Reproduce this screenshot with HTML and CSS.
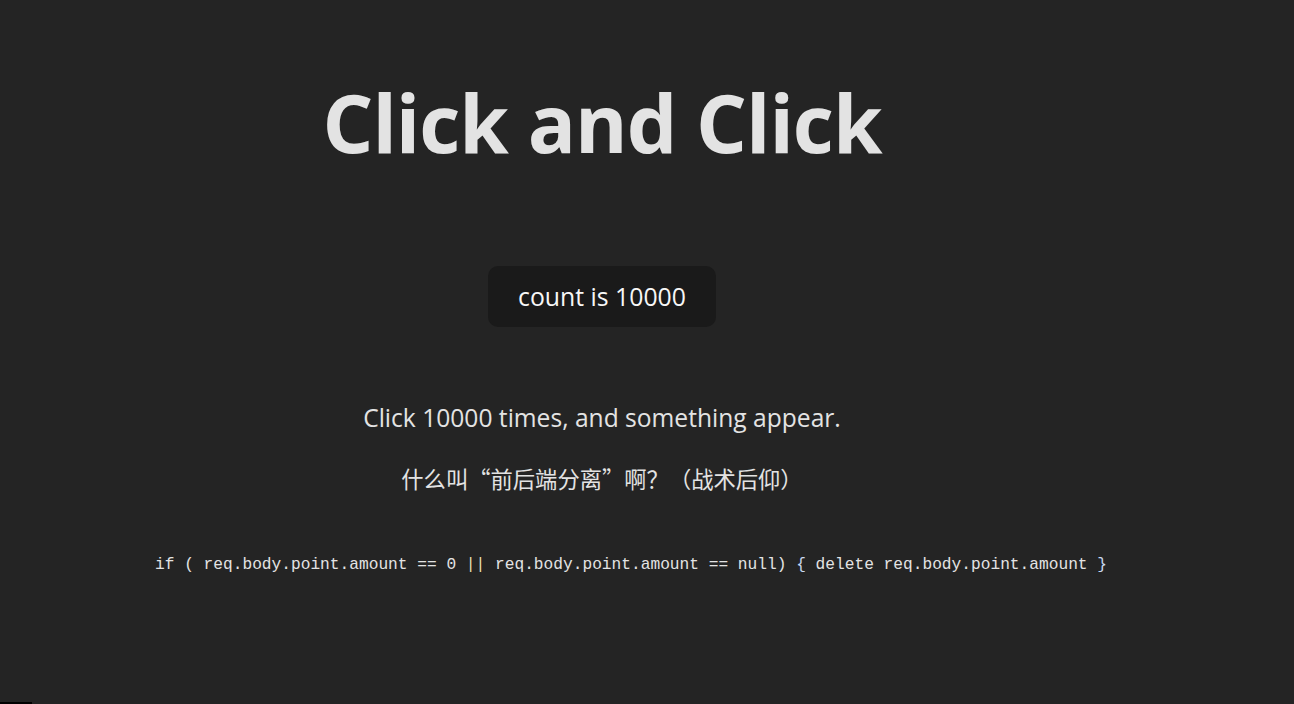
FILE: index.html
```html
<!DOCTYPE html>
<html lang="zh-CN">
<head>
<meta charset="utf-8">
<title>Click and Click</title>
<link rel="stylesheet" href="styles.css">
</head>
<body>
<main class="app">
  <h1 class="title">Click and Click</h1>
  <div class="card">
    <button class="counter" type="button">count is 10000</button>
  </div>
  <p class="hint">Click 10000 times, and something appear.</p>
  <p class="joke">什么叫“前后端分离”啊？（战术后仰）</p>
  <p class="code">if ( req.body.point.amount == 0 <span class="op">||</span> req.body.point.amount == null) <span class="brace">{</span> delete req.body.point.amount <span class="brace">}</span></p>
</main>
<div class="corner"></div>
</body>
</html>
```

FILE: styles.css
```css
html, body {
  margin: 0;
  padding: 0;
}

body {
  background: #242424;
  color: rgba(255, 255, 255, 0.87);
  font-family: "Open Sans", "Noto Sans CJK SC", sans-serif;
  min-height: 704px;
  overflow: hidden;
}

.app {
  width: 1204px;
  display: flex;
  flex-direction: column;
  align-items: center;
  text-align: center;
}

.title {
  margin: 78px 0 0;
  font-size: 80px;
  line-height: 88px;
  font-weight: 700;
  letter-spacing: -1px;
  color: #e3e3e3;
}

.card {
  margin-top: 100px;
}

.counter {
  font-family: inherit;
  font-size: 24.8px;
  line-height: 32px;
  padding: 14px 30px 15px;
  border: 0;
  border-radius: 10px;
  background: #1a1a1a;
  color: #f7f7f7;
  cursor: pointer;
}

.hint {
  margin: 75px 0 0;
  font-size: 24.6px;
  line-height: 32px;
  color: #e3e3e3;
}

.joke {
  margin: 28px 0 0;
  font-family: "Noto Sans CJK SC", sans-serif;
  font-size: 22.3px;
  line-height: 32px;
  color: #e3e3e3;
}

.code {
  margin: 61px 0 0;
  padding-left: 58px;
  font-family: "Liberation Mono", monospace;
  font-size: 16.2px;
  line-height: 20px;
  color: #e3e3e3;
  white-space: pre;
}

.op {
  color: #e6dfb0;
}

.brace {
  color: #c8d8f0;
}

.corner {
  position: fixed;
  left: 0;
  bottom: 0;
  width: 32px;
  height: 2px;
  background: #000;
}
```
